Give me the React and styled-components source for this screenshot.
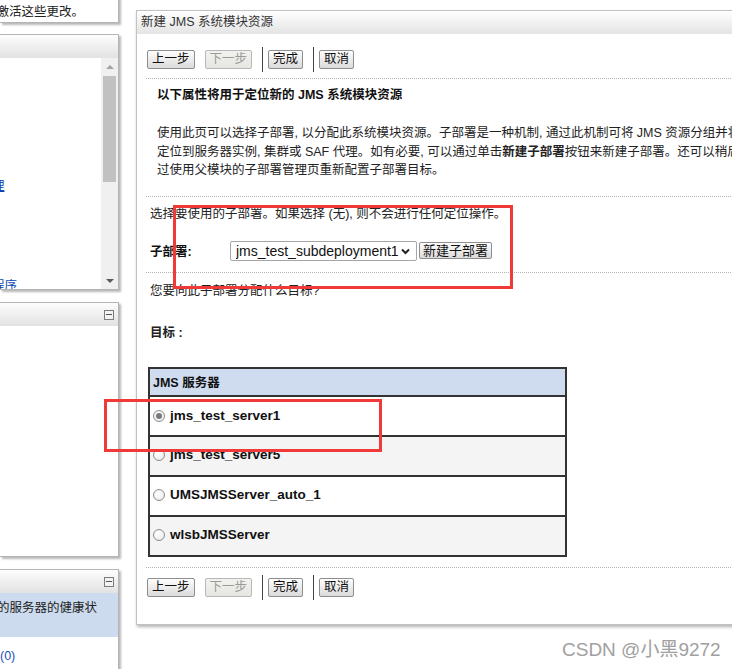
import React from 'react'
import styled, { createGlobalStyle } from 'styled-components'

const GlobalStyle = createGlobalStyle`
  html, body { margin: 0; padding: 0; background: #fff; }
  body {
    width: 732px;
    height: 669px;
    overflow: hidden;
    font-family: "Liberation Sans", "Noto Sans CJK SC", sans-serif;
    font-size: 12.5px;
    color: #1c1c1c;
  }
`

const Page = styled.div`
  position: relative;
  display: flex;
  align-items: flex-start;
  gap: 17px;
  width: 732px;
  height: 669px;
  overflow: hidden;
`

/* ---------- left column of portlets ---------- */
const SideColumn = styled.div`
  flex: none;
  width: 119px;
  margin-top: -20px;
  display: flex;
  flex-direction: column;
`

const SidePanel = styled.section`
  box-sizing: border-box;
  height: ${p => p.$height}px;
  margin-top: ${p => p.$gap || 0}px;
  background: #fff;
  border: 1px solid #b5b5b5;
  border-left: none;
  box-shadow: 2px 2px 2px rgba(0, 0, 0, 0.28);
  overflow: hidden;
  display: flex;
  flex-direction: column;
`

const PanelHeader = styled.div`
  flex: none;
  height: 23px;
  display: flex;
  align-items: center;
  justify-content: flex-end;
  padding-right: 4px;
  background: linear-gradient(#fdfdfd, #e2e2e2);
`

const CollapseBox = styled.span`
  box-sizing: border-box;
  width: 10px;
  height: 10px;
  border: 1px solid #7c7c7c;
  background: #f2f2f2;
  display: flex;
  align-items: center;
  justify-content: center;
  &::after {
    content: "";
    width: 6px;
    height: 1px;
    background: #555;
  }
`

const Notice = styled.div`
  padding-top: 22px;
  margin-left: -16px;
  line-height: 18px;
  white-space: nowrap;
  color: #222;
`

const ScrollBody = styled.div`
  flex: 1;
  display: flex;
  min-height: 0;
`

const LinkList = styled.div`
  flex: 1;
  display: flex;
  flex-direction: column;
  gap: 82px;
  padding-top: 119px;
  margin-left: -58px;
`

const NavLink = styled.a`
  line-height: 18px;
  white-space: nowrap;
  color: #0b46b0;
  text-decoration: underline;
`

const ScrollTrack = styled.div`
  flex: none;
  width: 17px;
  background: #f0f0f0;
  display: flex;
  flex-direction: column;
`

const ScrollArrow = styled.div`
  flex: none;
  height: 17px;
  display: flex;
  align-items: center;
  justify-content: center;
  &::after {
    content: "";
    border-left: 4px solid transparent;
    border-right: 4px solid transparent;
    ${p => (p.$down ? 'border-top: 4px solid #5a5a5a;' : 'border-bottom: 4px solid #a3a3a3;')}
  }
`

const ScrollThumb = styled.div`
  flex: none;
  height: 106px;
  margin: 1px 2px 0;
  background: #c1c1c1;
`

const ScrollGap = styled.div`
  flex: 1;
`

const HealthRow = styled.div`
  flex: none;
  height: 44px;
  box-sizing: border-box;
  padding-top: 6px;
  background: #cddbee;
  margin-left: -28px;
  line-height: 18px;
  white-space: nowrap;
  color: #222;
`

const Count = styled.a`
  display: block;
  margin-top: 10px;
  margin-left: -28.5px;
  line-height: 18px;
  white-space: nowrap;
  color: #1a4fb5;
`

/* ---------- main wizard panel ---------- */
const MainPanel = styled.section`
  flex: none;
  width: 700px;
  margin-top: 10px;
  background: #fff;
  border: 1px solid #c2c2c2;
  box-shadow: 1px 2px 3px rgba(0, 0, 0, 0.3);
`

const MainHeader = styled.div`
  height: 23px;
  line-height: 23px;
  padding-left: 4px;
  background: linear-gradient(#ffffff, #e4e4e4);
  color: #333;
`

const MainBody = styled.div`
  padding: 13px 0 24px 10px;
`

const Toolbar = styled.div`
  display: flex;
  align-items: center;
  height: 25px;
  gap: 10px;
  margin-top: ${p => p.$gap || 0}px;
`

const Button = styled.button`
  box-sizing: border-box;
  height: ${p => p.$h || 19}px;
  margin: 0;
  padding: 0 ${p => p.$pad || 4}px;
  font-family: "Liberation Sans", "Noto Sans CJK SC", sans-serif;
  font-size: ${p => p.$size || 12.5}px;
  line-height: 1;
  color: #111;
  border: 1px solid #8e8e8e;
  border-radius: 2px;
  background: linear-gradient(#fefefe, #dadada);
  &:disabled {
    color: #9a9a9a;
    border-color: #b8b8b8;
    background: linear-gradient(#f2f2ee, #e6e6e2);
  }
`

const Separator = styled.span`
  width: 1px;
  height: 25px;
  background: #444;
  margin-right: -5px;
`

const Divider = styled.div`
  margin-top: ${p => p.$gap}px;
  margin-left: -1px;
  border-top: 1px dotted #b4b4b4;
`

const Heading = styled.div`
  margin-top: 7px;
  padding-left: 10px;
  line-height: 18px;
  font-weight: bold;
  color: #111;
`

const Intro = styled.p`
  margin: 20px 0 0;
  padding-left: 10px;
  line-height: 18.5px;
  white-space: nowrap;
  color: #222;
`

const Line = styled.div`
  margin-top: ${p => p.$gap}px;
  padding-left: 3px;
  line-height: 18px;
  white-space: nowrap;
  font-weight: ${p => (p.$bold ? 'bold' : 'normal')};
  color: #222;
`

const SelectRow = styled.div`
  margin-top: 17px;
  height: 22px;
  display: flex;
  align-items: center;
  padding-left: 3px;
`

const FieldLabel = styled.label`
  width: 80px;
  font-weight: bold;
  color: #111;
`

const SelectWrap = styled.span`
  position: relative;
  display: inline-flex;
  width: 187px;
  height: 20px;
  margin-right: 2px;
`

const Select = styled.select`
  appearance: none;
  box-sizing: border-box;
  width: 100%;
  height: 100%;
  margin: 0;
  padding: 0 0 0 5px;
  border: 1px solid #a6a6a6;
  border-radius: 2px;
  background: #fff;
  font: 14px "Liberation Sans", Arial, sans-serif;
  color: #111;
`

const Chevron = styled.svg`
  position: absolute;
  right: 7px;
  top: 7px;
  pointer-events: none;
`

const ServerTable = styled.table`
  margin: 25px 0 0 1px;
  width: 419px;
  border-collapse: separate;
  border-spacing: 0;
  border: 1px solid #333;
`

const HeadCell = styled.th`
  height: 26px;
  padding: 0 3px;
  text-align: left;
  background: #cfdcef;
  border: 1px solid #333;
  font-weight: bold;
  color: #111;
`

const Cell = styled.td`
  height: 38px;
  padding: 0 3px;
  background: ${p => (p.$alt ? '#f4f4f4' : '#fff')};
  border: 1px solid #333;
`

const Choice = styled.label`
  display: inline-flex;
  align-items: center;
  gap: 5px;
  font: bold 13.5px "Liberation Sans", Arial, sans-serif;
  color: #111;
`

const Radio = styled.span`
  box-sizing: border-box;
  width: 12px;
  height: 12px;
  border-radius: 50%;
  border: 1px solid #8c8c8c;
  background: radial-gradient(circle at 40% 35%, #fff, #e8e8e8);
  display: flex;
  align-items: center;
  justify-content: center;
  &::after {
    content: "";
    display: ${p => (p.$checked ? 'block' : 'none')};
    width: 6px;
    height: 6px;
    border-radius: 50%;
    background: #7a7a7a;
  }
`

/* ---------- overlays ---------- */
const Callout = styled.div`
  position: absolute;
  left: ${p => p.$x}px;
  top: ${p => p.$y}px;
  width: ${p => p.$w}px;
  height: ${p => p.$h}px;
  box-sizing: border-box;
  border: 3px solid #f03a3a;
  pointer-events: none;
`

const Watermark = styled.div`
  position: absolute;
  left: 562px;
  top: 638px;
  font-family: "Liberation Sans", "Noto Sans CJK SC", sans-serif;
  font-size: 19px;
  line-height: 24px;
  color: #a0a0a0;
  white-space: nowrap;
`

const servers = ['jms_test_server1', 'jms_test_server5', 'UMSJMSServer_auto_1', 'wlsbJMSServer']

const WizardButtons = ({ gap }) => (
  <Toolbar $gap={gap}>
    <Button>上一步</Button>
    <Button disabled>下一步</Button>
    <Separator />
    <Button>完成</Button>
    <Separator />
    <Button>取消</Button>
  </Toolbar>
)

const App = () => {
  return (
    <Page>
      <GlobalStyle />
      <SideColumn>
        <SidePanel $height={43}>
          <Notice>以激活这些更改。</Notice>
        </SidePanel>

        <SidePanel $height={256} $gap={11}>
          <PanelHeader />
          <ScrollBody>
            <LinkList>
              <NavLink>服务器管理</NavLink>
              <NavLink>部署应用程序</NavLink>
            </LinkList>
            <ScrollTrack>
              <ScrollArrow />
              <ScrollThumb />
              <ScrollGap />
              <ScrollArrow $down />
            </ScrollTrack>
          </ScrollBody>
        </SidePanel>

        <SidePanel $height={255} $gap={12}>
          <PanelHeader>
            <CollapseBox />
          </PanelHeader>
        </SidePanel>

        <SidePanel $height={120} $gap={12}>
          <PanelHeader>
            <CollapseBox />
          </PanelHeader>
          <HealthRow>
            显示的服务器的健康状<br />态。
          </HealthRow>
          <Count>失败 (0)</Count>
        </SidePanel>
      </SideColumn>

      <MainPanel>
        <MainHeader>新建 JMS 系统模块资源</MainHeader>
        <MainBody>
          <WizardButtons gap={0} />
          <Divider $gap={6} />
          <Heading>以下属性将用于定位新的 JMS 系统模块资源</Heading>
          <Intro>
            使用此页可以选择子部署, 以分配此系统模块资源。子部署是一种机制, 通过此机制可将 JMS 资源分组并将其
            <br />
            定位到服务器实例, 集群或 SAF 代理。如有必要, 可以通过单击<b>新建子部署</b>按钮来新建子部署。还可以稍后通
            <br />
            过使用父模块的子部署管理页重新配置子部署目标。
          </Intro>
          <Divider $gap={16} />
          <Line $gap={8}>选择要使用的子部署。如果选择 (无), 则不会进行任何定位操作。</Line>
          <SelectRow>
            <FieldLabel>子部署:</FieldLabel>
            <SelectWrap>
              <Select defaultValue="jms_test_subdeployment1">
                <option>jms_test_subdeployment1</option>
                <option>(无)</option>
              </Select>
              <Chevron width="9" height="7" viewBox="0 0 9 7">
                <path d="M1 1.5 L4.5 5 L8 1.5" fill="none" stroke="#222" strokeWidth="2" />
              </Chevron>
            </SelectWrap>
            <Button $h={17} $pad={3} $size={13}>新建子部署</Button>
          </SelectRow>
          <Divider $gap={10} />
          <Line $gap={9}>您要向此子部署分配什么目标?</Line>
          <Line $gap={24} $bold>目标 :</Line>
          <ServerTable>
            <thead>
              <tr>
                <HeadCell>JMS 服务器</HeadCell>
              </tr>
            </thead>
            <tbody>
              {servers.map((name, i) => (
                <tr key={name}>
                  <Cell $alt={i % 2 === 1}>
                    <Choice>
                      <Radio $checked={i === 0} />
                      {name}
                    </Choice>
                  </Cell>
                </tr>
              ))}
            </tbody>
          </ServerTable>
          <Divider $gap={10} />
          <WizardButtons gap={7} />
        </MainBody>
      </MainPanel>

      <Callout $x={173} $y={205} $w={340} $h={84} />
      <Callout $x={104} $y={399} $w={278} $h={53} />
      <Watermark>CSDN @小黑9272</Watermark>
    </Page>
  )
}

export default App
